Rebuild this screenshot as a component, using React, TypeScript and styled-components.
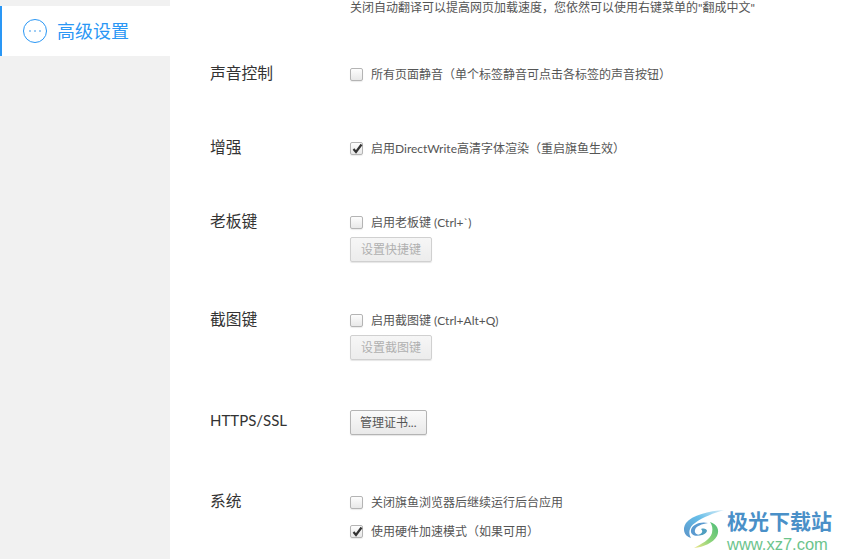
import React from 'react';
import styled, { createGlobalStyle } from 'styled-components';

const GlobalStyle = createGlobalStyle`
  html, body {
    margin: 0;
    height: 100%;
    background: #fff;
    overflow: hidden;
  }
  body {
    font-family: Lato, "Noto Sans CJK SC", sans-serif;
  }
`;

const Page = styled.div`
  display: flex;
  width: 842px;
  height: 559px;
  position: relative;
  overflow: hidden;
`;

const Sidebar = styled.aside`
  width: 170px;
  flex-shrink: 0;
  background: #f1f1f1;
  padding-top: 6px;
  box-sizing: border-box;
`;

const NavItem = styled.div`
  display: flex;
  align-items: center;
  gap: 10px;
  height: 50px;
  padding-left: 21px;
  background: #fff;
  border-left: 2px solid #2a97f5;
  color: #2a97f5;
  font-size: 18px;
`;

const NavText = styled.span`
  padding-bottom: 2px;
`;

const MoreIcon = styled.span`
  width: 24px;
  height: 24px;
  box-sizing: border-box;
  border: 1px solid #2a97f5;
  border-radius: 50%;
  display: flex;
  align-items: center;
  justify-content: center;
  gap: 3px;

  i {
    width: 2px;
    height: 2px;
    border-radius: 50%;
    background: #7fbcf2;
  }
`;

const Main = styled.main`
  flex: 1;
  padding-left: 40px;
`;

const Section = styled.section<{ $top: number }>`
  display: flex;
  margin-top: ${(p) => p.$top}px;
`;

const SectionLabel = styled.div<{ $offset?: number; $latin?: boolean }>`
  width: 140px;
  flex-shrink: 0;
  font-size: ${(p) => (p.$latin ? 15 : 15.75)}px;
  line-height: 18px;
  padding-bottom: 2px;
  color: #333;
  margin-top: ${(p) => p.$offset ?? 0}px;
`;

const Content = styled.div`
  display: flex;
  flex-direction: column;
  align-items: flex-start;
`;

const Note = styled.div`
  font-size: 12px;
  line-height: 15px;
  color: #555;
  margin-left: 140px;
  white-space: nowrap;
`;

const Row = styled.label<{ $gap?: number }>`
  display: flex;
  align-items: center;
  height: 20px;
  font-size: 12px;
  color: #555;
  white-space: nowrap;
  margin-top: ${(p) => p.$gap ?? 0}px;
`;

const RowText = styled.span`
  padding-bottom: 2px;
`;

const Box = styled.span`
  width: 13px;
  height: 13px;
  box-sizing: border-box;
  margin-right: 8px;
  border: 1px solid #b4b4b4;
  border-radius: 2px;
  background: linear-gradient(#fdfdfd, #e8e8e8);
  box-shadow: 0 1px 1px rgba(0, 0, 0, 0.08);
  position: relative;
  flex-shrink: 0;

  svg {
    position: absolute;
    left: 0;
    top: -1px;
  }
`;

const Button = styled.button<{ $disabled?: boolean }>`
  display: block;
  height: 25px;
  padding: 0 ${(p) => (p.$disabled ? 10 : 9)}px 3px;
  margin: 5px 0 0;
  box-sizing: border-box;
  font: inherit;
  font-size: 12px;
  color: ${(p) => (p.$disabled ? '#b0b0b0' : '#555')};
  border: 1px solid ${(p) => (p.$disabled ? '#d0d0d0' : '#b4b4b4')};
  border-radius: 2px;
  background: ${(p) =>
    p.$disabled ? 'linear-gradient(#f6f6f6, #ececec)' : 'linear-gradient(#fafafa, #e9e9e9)'};
  box-shadow: 0 1px 1px rgba(0, 0, 0, 0.1);
`;

const Watermark = styled.div`
  position: absolute;
  left: 681px;
  top: 506px;
  display: flex;
  gap: 1px;
`;

const MarkText = styled.div`
  display: flex;
  flex-direction: column;
  padding-top: 2px;
`;

const MarkName = styled.div`
  font-size: 21px;
  line-height: 26px;
  font-weight: 700;
  color: #4a90c8;
  white-space: nowrap;
`;

const MarkUrl = styled.div`
  font-family: "Liberation Sans", sans-serif;
  font-size: 16.5px;
  line-height: 20px;
  color: #6cc48c;
  white-space: nowrap;
`;

const Check = () => (
  <svg width="13" height="13" viewBox="0 0 13 13">
    <path d="M2.5 7 L5 10 L10.5 2.5" fill="none" stroke="#333" strokeWidth="2.2" />
  </svg>
);

const CheckRow = ({ checked, gap, children }: { checked?: boolean; gap?: number; children: React.ReactNode }) => (
  <Row $gap={gap}>
    <Box>{checked && <Check />}</Box>
    <RowText>{children}</RowText>
  </Row>
);

const Swirl = () => (
  <svg width="45" height="48" viewBox="0 0 45 48">
    <defs>
      <linearGradient id="outer" x1="1" y1="0" x2="0" y2="1">
        <stop offset="0" stopColor="#d8eef8" />
        <stop offset="0.45" stopColor="#66bde8" />
        <stop offset="1" stopColor="#5b94c8" />
      </linearGradient>
      <linearGradient id="lower" x1="1" y1="0" x2="0" y2="1">
        <stop offset="0" stopColor="#4dbd78" />
        <stop offset="0.55" stopColor="#8ed47a" />
        <stop offset="1" stopColor="#f0e58c" />
      </linearGradient>
    </defs>
    <path d="M43 4 C28 5 11 9 5 17 C1 23 3 30 10 32 C7 27 8 21 14 17 C22 11 33 7 43 4Z" fill="url(#outer)" />
    <path d="M27 17 C19 15 11 19 10 24 C9 29 15 31 20 29 C16 29 13 27 14 24 C15 20 21 18 27 17Z" fill="#5a9ad0" />
    <path d="M20 23 C23 22 26 23 26 25 C25 28 21 30 17 29 C20 28 23 26 20 23Z" fill="#4f9fc0" />
    <path d="M29 16 C36 18 39 24 36 30 C32 37 23 41 13 42 C20 38 29 34 31 27 C32 22 31 19 29 16Z" fill="url(#lower)" />
  </svg>
);

export default function App() {
  return (
    <Page>
      <GlobalStyle />
      <Sidebar>
        <NavItem>
          <MoreIcon><i /><i /><i /></MoreIcon>
          <NavText>高级设置</NavText>
        </NavItem>
      </Sidebar>
      <Main>
        <Note>关闭自动翻译可以提高网页加载速度，您依然可以使用右键菜单的"翻成中文"</Note>
        <Section $top={49}>
          <SectionLabel>声音控制</SectionLabel>
          <Content>
            <CheckRow>所有页面静音（单个标签静音可点击各标签的声音按钮）</CheckRow>
          </Content>
        </Section>
        <Section $top={54}>
          <SectionLabel>增强</SectionLabel>
          <Content>
            <CheckRow checked>启用DirectWrite高清字体渲染（重启旗鱼生效）</CheckRow>
          </Content>
        </Section>
        <Section $top={54}>
          <SectionLabel>老板键</SectionLabel>
          <Content>
            <CheckRow>启用老板键 (Ctrl+`)</CheckRow>
            <Button $disabled>设置快捷键</Button>
          </Content>
        </Section>
        <Section $top={48}>
          <SectionLabel>截图键</SectionLabel>
          <Content>
            <CheckRow>启用截图键 (Ctrl+Alt+Q)</CheckRow>
            <Button $disabled>设置截图键</Button>
          </Content>
        </Section>
        <Section $top={45}>
          <SectionLabel $offset={6} $latin>HTTPS/SSL</SectionLabel>
          <Content>
            <Button>管理证书...</Button>
          </Content>
        </Section>
        <Section $top={57}>
          <SectionLabel>系统</SectionLabel>
          <Content>
            <CheckRow>关闭旗鱼浏览器后继续运行后台应用</CheckRow>
            <CheckRow checked gap={9}>使用硬件加速模式（如果可用）</CheckRow>
          </Content>
        </Section>
      </Main>
      <Watermark>
        <Swirl />
        <MarkText>
          <MarkName>极光下载站</MarkName>
          <MarkUrl>www.xz7.com</MarkUrl>
        </MarkText>
      </Watermark>
    </Page>
  );
}
